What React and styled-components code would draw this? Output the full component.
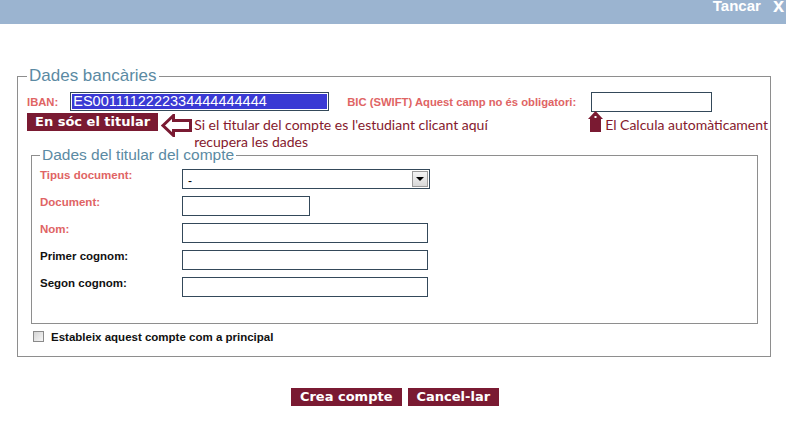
import styled, { createGlobalStyle } from 'styled-components';

const GlobalStyle = createGlobalStyle`
    html, body {
        margin: 0;
        padding: 0;
        background: #ffffff;
        overflow: hidden;
    }
    body {
        font-family: "Liberation Sans", Arial, sans-serif;
    }
`;

const MAROON = '#7a1a32';

export default function App() {
    return (
        <Page>
            <GlobalStyle />
            <TopBar>
                <CloseText>Tancar</CloseText>
                <CloseX>x</CloseX>
            </TopBar>
            <Content>
                <OuterSet>
                    <Legend $size={17}>Dades bancàries</Legend>
                    <IbanRow>
                        <FieldLabel $mr={12}>IBAN:</FieldLabel>
                        <IbanInput>
                            <Selected>ES0011112222334444444444</Selected>
                        </IbanInput>
                        <FieldLabel $ml={18} $mr={15}>BIC (SWIFT) Aquest camp no és obligatori:</FieldLabel>
                        <TextInput $w={121} />
                    </IbanRow>
                    <HelpRow>
                        <MaroonButton>En sóc el titular</MaroonButton>
                        <LeftArrow width="31" height="23" viewBox="0 0 31 23">
                            <polygon
                                points="2,11.5 12.5,1.5 12.5,6.5 29.5,6.5 29.5,16.5 12.5,16.5 12.5,21.5"
                                fill="#fff"
                                stroke={MAROON}
                                strokeWidth="3"
                                strokeLinejoin="miter"
                            />
                        </LeftArrow>
                        <Hint $w={397}>
                            Si el titular del compte es l'estudiant clicant aquí<br />recupera les dades
                        </Hint>
                        <UpArrow width="15" height="21" viewBox="0 0 15 21">
                            <polygon points="7.5,0 15,8 13,8 13,21 2,21 2,8 0,8" fill={MAROON} />
                            <rect x="6.5" y="5" width="2" height="2" fill="#fff" />
                        </UpArrow>
                        <Hint>El Calcula automàticament</Hint>
                    </HelpRow>
                    <InnerSet>
                        <Legend $size={15.5}>Dades del titular del compte</Legend>
                        <FormRow>
                            <RowLabel $required>Tipus document:</RowLabel>
                            <SelectBox>
                                <SelectValue>-</SelectValue>
                                <SelectButton>
                                    <Triangle />
                                </SelectButton>
                            </SelectBox>
                        </FormRow>
                        <FormRow>
                            <RowLabel $required>Document:</RowLabel>
                            <TextInput $w={128} />
                        </FormRow>
                        <FormRow>
                            <RowLabel $required>Nom:</RowLabel>
                            <TextInput $w={246} />
                        </FormRow>
                        <FormRow>
                            <RowLabel>Primer cognom:</RowLabel>
                            <TextInput $w={246} />
                        </FormRow>
                        <FormRow>
                            <RowLabel>Segon cognom:</RowLabel>
                            <TextInput $w={246} />
                        </FormRow>
                    </InnerSet>
                    <CheckRow>
                        <CheckBox />
                        <CheckLabel>Estableix aquest compte com a principal</CheckLabel>
                    </CheckRow>
                </OuterSet>
                <Actions>
                    <MaroonButton $px={9}>Crea compte</MaroonButton>
                    <MaroonButton $px={9}>Cancel-lar</MaroonButton>
                </Actions>
            </Content>
        </Page>
    );
}

const Page = styled.div`
    width: 786px;
    height: 427px;
    overflow: hidden;
`;

const TopBar = styled.div`
    height: 24px;
    background-color: #9bb4d0;
    display: flex;
    justify-content: flex-end;
    align-items: flex-start;
    overflow: hidden;
`;

const CloseText = styled.span`
    color: #ffffff;
    font-weight: 700;
    font-size: 15px;
    line-height: 17px;
    margin-top: -3px;
`;

const CloseX = styled.span`
    color: #ffffff;
    font-weight: 700;
    font-size: 20px;
    line-height: 20px;
    margin-top: -5px;
    margin-left: 12px;
    margin-right: 2px;
`;

const Content = styled.div`
    padding: 0 15px 0 17px;
`;

const OuterSet = styled.fieldset`
    margin: 43px 0 0 0;
    padding: 7px 9px 12px 9px;
    border: 1px solid #8e8e8e;
    min-width: 0;
`;

const Legend = styled.legend`
    padding: 0 2px;
    font-size: ${p => p.$size}px;
    line-height: 18px;
    color: #5b8aa3;
`;

const IbanRow = styled.div`
    display: flex;
    align-items: center;
    height: 19px;
`;

const FieldLabel = styled.span`
    color: #e06464;
    font-weight: 700;
    font-size: 11.25px;
    margin-left: ${p => p.$ml || 0}px;
    margin-right: ${p => p.$mr || 0}px;
`;

const IbanInput = styled.div`
    box-sizing: border-box;
    width: 259px;
    height: 19px;
    border: 1px solid #34495a;
    padding: 1px;
    display: flex;
`;

const Selected = styled.span`
    flex: 1;
    background-color: #3a3ad4;
    color: #ffffff;
    font-size: 14.5px;
    line-height: 15px;
    padding-left: 1px;
    white-space: nowrap;
    overflow: hidden;
`;

const TextInput = styled.div`
    box-sizing: border-box;
    width: ${p => p.$w}px;
    height: 20px;
    border: 1px solid #34495a;
    background: #ffffff;
`;

const HelpRow = styled.div`
    display: flex;
    align-items: flex-start;
    height: 18px;
    margin-top: 2px;
`;

const MaroonButton = styled.button`
    box-sizing: border-box;
    height: 18px;
    border: none;
    margin: 0;
    padding: 0 ${p => p.$px || 8}px;
    background-color: ${MAROON};
    color: #ffffff;
    font-family: "DejaVu Sans", Verdana, sans-serif;
    font-weight: 700;
    font-size: 13px;
    line-height: 18px;
    white-space: nowrap;
`;

const LeftArrow = styled.svg`
    flex: none;
    margin: 1px 0 0 3px;
`;

const UpArrow = styled.svg`
    flex: none;
    margin: -2px 0 0 -1px;
`;

const Hint = styled.span`
    flex: none;
    width: ${p => (p.$w ? `${p.$w - 2}px` : 'auto')};
    margin-left: 2px;
    margin-top: 3px;
    color: #85192d;
    font-family: Lato, "Open Sans", sans-serif;
    font-size: 14px;
    line-height: 17px;
    white-space: nowrap;
`;

const InnerSet = styled.fieldset`
    margin: 15px 3px 0 4px;
    padding: 5px 8px 26px 8px;
    border: 1px solid #8e8e8e;
    min-width: 0;
    display: flex;
    flex-direction: column;
    gap: 7px;
`;

const FormRow = styled.div`
    display: flex;
    align-items: flex-start;
`;

const RowLabel = styled.span`
    width: 142px;
    flex: none;
    color: ${p => (p.$required ? '#e06464' : '#111111')};
    font-weight: 700;
    font-size: 11.5px;
    line-height: 13px;
`;

const SelectBox = styled.div`
    box-sizing: border-box;
    width: 248px;
    height: 20px;
    border: 1px solid #34495a;
    display: flex;
    align-items: center;
    justify-content: space-between;
    padding: 1px;
`;

const SelectValue = styled.span`
    font-size: 12px;
    color: #000;
    padding-left: 4px;
    padding-top: 3px;
`;

const SelectButton = styled.span`
    box-sizing: border-box;
    width: 16px;
    height: 16px;
    border: 1px solid #9a9a9a;
    background: linear-gradient(#f4f4f4, #d8d8d8);
    display: flex;
    align-items: center;
    justify-content: center;
`;

const Triangle = styled.span`
    width: 0;
    height: 0;
    border-left: 4px solid transparent;
    border-right: 4px solid transparent;
    border-top: 4px solid #000;
`;

const CheckRow = styled.div`
    display: flex;
    align-items: center;
    margin-top: 7px;
    padding-left: 6px;
`;

const CheckBox = styled.span`
    box-sizing: border-box;
    width: 11px;
    height: 11px;
    border: 1px solid #8a8a8a;
    background: linear-gradient(135deg, #d4d4d4, #f6f6f6);
    margin-top: -2px;
`;

const CheckLabel = styled.span`
    margin-left: 7px;
    font-size: 11.5px;
    font-weight: 700;
    line-height: 13px;
    color: #111111;
`;

const Actions = styled.div`
    display: flex;
    justify-content: center;
    gap: 6px;
    margin-top: 31px;
    padding-left: 2px;
`;
